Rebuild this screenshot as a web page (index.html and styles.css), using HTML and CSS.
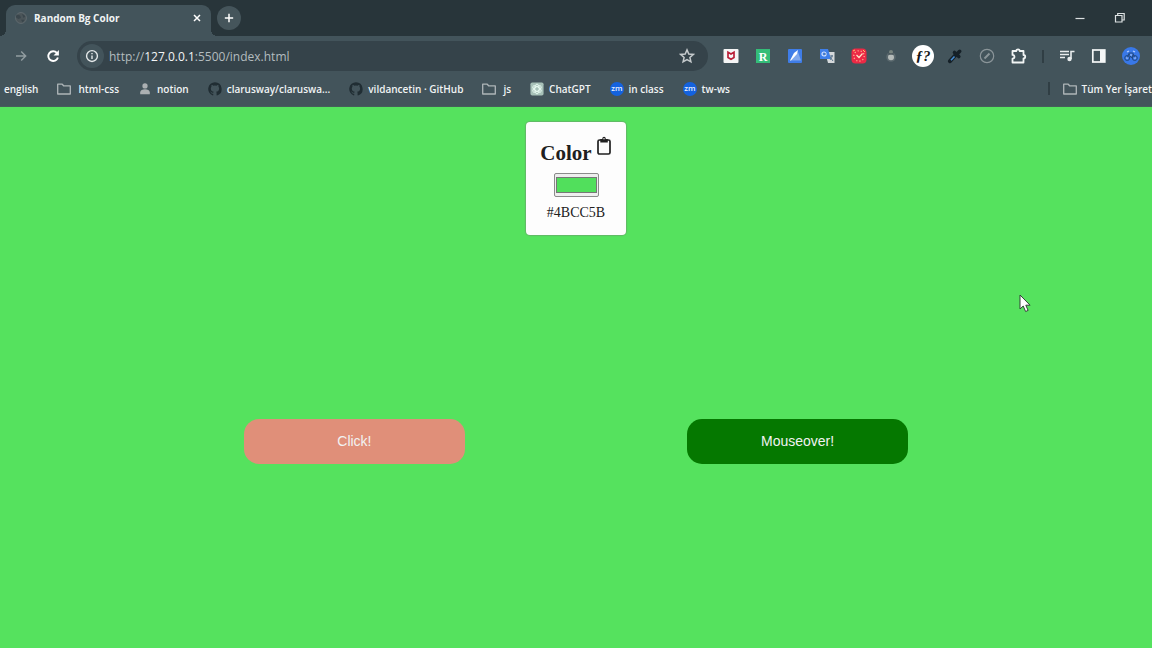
FILE: index.html
```html
<!DOCTYPE html>
<html lang="tr">
<head>
<meta charset="utf-8">
<title>Random Bg Color</title>
<link rel="stylesheet" href="styles.css">
</head>
<body>
<svg class="defs" aria-hidden="true">
  <symbol id="folder" viewBox="0 0 16 16"><path d="M.8 2.500h5.200l1.800 2h7.400v9.200H.8z" fill="none" stroke="#aeb5b8" stroke-width="1.500" stroke-linejoin="round"/></symbol>
  <symbol id="github" viewBox="0 0 16 16"><path fill="#202d33" d="M8 .3a7.700 7.700 0 0 0-2.500 15c.4.1.5-.2.5-.4v-1.600c-2.100.5-2.500-.9-2.500-.9-.3-.9-.8-1.100-.8-1.100-.7-.5 0-.5 0-.5.8.1 1.200.8 1.200.8.7 1.200 1.800.8 2.200.6.1-.5.3-.8.5-1-1.700-.2-3.400-.8-3.400-3.700 0-.8.3-1.500.8-2-.1-.2-.3-1 .1-2 0 0 .6-.2 2 .8a7 7 0 0 1 3.700 0c1.400-1 2-.8 2-.8.4 1 .2 1.800.1 2 .5.5.8 1.200.8 2 0 2.900-1.700 3.500-3.400 3.700.3.2.5.7.5 1.400v2.300c0 .2.100.5.5.4A7.700 7.700 0 0 0 8 .3z"/></symbol>
</svg>

<header class="browser">
  <div class="tabs">
    <div class="tab">
      <svg class="favicon" viewBox="0 0 16 16" aria-hidden="true"><circle cx="8" cy="8" r="6.200" fill="#4b5559" stroke="#626d71" stroke-width="1"/><path d="M3 4l4 1 1 3-3 1-3-2zM9 3l4 3-2 2zM8 10l4 0-2 3z" fill="#3a464c"/></svg>
      <span class="tab-title">Random Bg Color</span>
      <button class="close" aria-label="Close tab"><svg viewBox="0 0 12 12"><path d="M3 3l6 6M9 3l-6 6"/></svg></button>
    </div>
    <button class="new-tab" aria-label="New tab"><svg viewBox="0 0 12 12"><path d="M6 1v10M1 6h10"/></svg></button>
    <div class="window-controls">
      <button aria-label="Minimize"><svg viewBox="0 0 12 12"><path d="M1.500 6.500h9"/></svg></button>
      <button aria-label="Restore"><svg viewBox="0 0 12 12"><path d="M1.500 3.500h6.500v6.500h-6.500zM3.700 3.300v-1.800h6.500v6.500h-2"/></svg></button>
    </div>
  </div>

  <div class="toolbar">
    <button class="tool" aria-label="Forward"><svg viewBox="0 0 16 16" fill="none" stroke="#929da1" stroke-width="1.400"><path d="M3 8h9.500M8.200 3.500L12.700 8l-4.500 4.500"/></svg></button>
    <button class="tool" aria-label="Reload"><svg viewBox="0 0 16 16" fill="none" stroke="#fff" stroke-width="1.900"><path d="M12.900 9.500A4.900 4.900 0 1 1 11.900 4.900"/><path d="M13.900 2v5.400H8.500z" fill="#fff" stroke="none"/></svg></button>
    <div class="omnibox">
      <button class="site-info" aria-label="Site information"><svg viewBox="0 0 16 16" fill="none" stroke="#e4e8e9" stroke-width="1.600"><circle cx="8" cy="8" r="6.200"/><path d="M8 7.300v4M8 4.500v1.400"/></svg></button>
      <p class="url">http://<span>127.0.0.1</span>:5500/index.html</p>
      <button class="star" aria-label="Bookmark"><svg viewBox="0 0 16 16" fill="none" stroke="#c5cacc" stroke-width="1.500"><path d="M8 1.900l1.800 4.100 4.500.4-3.400 3 1 4.400L8 11.500l-3.900 2.300 1-4.400-3.400-3 4.500-.4z"/></svg></button>
    </div>
    <div class="extensions">
      <button class="tool" aria-label="McAfee"><svg viewBox="0 0 16 16"><rect x=".5" y="1" width="15" height="14" rx="1" fill="#f5f5f5"/><path d="M5 4.300v5.200L8 11.300l3-1.800V4.300L8 6z" fill="none" stroke="#b91f38" stroke-width="1.700"/></svg></button>
      <button class="tool" aria-label="R extension"><svg viewBox="0 0 16 16"><rect x="1" y="1" width="14" height="14" fill="#34bd78"/><text x="8" y="12.500" text-anchor="middle" class="r-text">R</text></svg></button>
      <button class="tool" aria-label="Notes"><svg viewBox="0 0 16 16"><rect x="1" y="1" width="14" height="14" rx="1" fill="#3f7de8"/><path d="M3 12.500L11 4l3 8.500z" fill="#80a8ed"/><path d="M3 12.500L7 5l4-3-1 4L4 12.500z" fill="#fff"/></svg></button>
      <button class="tool" aria-label="Translate"><svg viewBox="0 0 16 16"><path d="M6 4h9.500v11H9z" fill="#d5d9db"/><path d="M1 1h8l3 10H1z" fill="#3f7fe9"/><circle cx="5" cy="6" r="2" fill="none" stroke="#d5e4ff" stroke-width="1.200"/><path d="M5 6h2M11 8h3M13 7v1c0 2-2 4-2 4M11 9l3 4" fill="none" stroke="#59738a" stroke-width="1"/></svg></button>
      <button class="tool" aria-label="Clock"><svg viewBox="0 0 16 16"><rect x=".5" y=".5" width="15" height="15" rx="4" fill="#ec2945"/><circle cx="8" cy="8" r="5.200" fill="none" stroke="#ffa98d" stroke-width="1.300" stroke-dasharray="1.200 2"/><path d="M5.500 7l2.500 2.500L11.500 5.500" fill="none" stroke="#ffe6ca" stroke-width="1.200"/><path d="M2 3l2-1M12 2l2 2" stroke="#ffc36a"/></svg></button>
      <button class="tool" aria-label="Assistant"><svg viewBox="0 0 16 16"><circle cx="8" cy="9" r="4.800" fill="#5b696e"/><circle cx="8" cy="4" r="2" fill="#78847f"/><circle cx="8" cy="9.200" r="3" fill="#b5bbb9"/><path d="M5.500 6h5" stroke="#35434a" stroke-width="1"/></svg></button>
      <button class="tool whatfont" aria-label="WhatFont"><svg viewBox="0 0 22 22"><circle cx="11" cy="11" r="11" fill="#fff"/><text x="11" y="15.500" text-anchor="middle" class="font-text">ƒ?</text></svg></button>
      <button class="tool" aria-label="Color picker"><svg viewBox="0 0 16 16"><path d="M3 13.200L9.500 6" stroke="#152027" stroke-width="4" stroke-linecap="round"/><path d="M7.500 4.500l4.300 4M10 6l2.700-2.700" stroke="#152027" stroke-width="3.600" stroke-linecap="round"/><path d="M4 12.300L7.500 8.500" stroke="#438bd5" stroke-width="1.500"/></svg></button>
      <button class="tool" aria-label="Compass"><svg viewBox="0 0 16 16" fill="none" stroke="#8b9599" stroke-width="1.200"><circle cx="8" cy="8" r="6.700"/><path d="M5.500 10.500L10.500 5.500" stroke-width="2"/></svg></button>
      <button class="tool" aria-label="Extensions"><svg viewBox="0 0 16 16" fill="none" stroke="#f1f4f4" stroke-width="1.800"><path d="M1.500 3h3.800c0-2.200 3.400-2.200 3.400 0h3.800v4c2.300 0 2.300 3.300 0 3.300v4.200H1.500v-3.800c2.600-.2 2.600-3.600 0-3.800z" stroke-linejoin="round"/></svg></button>
      <span class="divider"></span>
      <button class="tool" aria-label="Media"><svg viewBox="0 0 16 16" fill="none" stroke="#e9edee" stroke-width="1.600"><path d="M1 3.500h9M1 6.500h9M1 9.500h5M12 11V3.500h3.500"/><circle cx="10.500" cy="11" r="2.200" fill="#e9edee" stroke="none"/></svg></button>
      <button class="tool" aria-label="Side panel"><svg viewBox="0 0 16 16"><rect x="1.800" y="2" width="12" height="12" fill="none" stroke="#f5f7f7" stroke-width="1.700"/><path d="M9 2h5v12H9z" fill="#f5f7f7"/></svg></button>
      <button class="tool profile" aria-label="Profile"><svg viewBox="0 0 18 18"><circle cx="9" cy="9" r="9" fill="#3978e8"/><g fill="none" stroke="#234a83" stroke-width="1"><circle cx="5.200" cy="11" r="2.500"/><circle cx="12.800" cy="11" r="2.500"/><path d="M5.200 11l2-5h3.600l2 5M7 7l2.500 4 2-4"/></g><path d="M5 5l2-1M11 4l2 1M8 8h2M4 11h2M12 11h2" stroke="#b5ceff" stroke-width="1.200"/></svg></button>
    </div>
  </div>

  <nav class="bookmarks" aria-label="Bookmarks">
    <a href="#">english</a>
    <a href="#" class="folder"><svg><use href="#folder"/></svg>html-css</a>
    <a href="#"><svg viewBox="0 0 16 16"><circle cx="8" cy="4.500" r="3" fill="#abb0b2"/><path d="M2.500 14v-2c0-5 11-5 11 0v2z" fill="#abb0b2"/></svg>notion</a>
    <a href="#"><svg><use href="#github"/></svg>clarusway/claruswa...</a>
    <a href="#"><svg><use href="#github"/></svg>vildancetin · GitHub</a>
    <a href="#" class="folder"><svg><use href="#folder"/></svg>js</a>
    <a href="#"><svg viewBox="0 0 16 16"><rect x=".5" y=".5" width="15" height="15" rx="2" fill="#a7c1b8"/><g fill="none" stroke="#ecfff6" stroke-width="1"><ellipse cx="8" cy="8" rx="2.500" ry="5.500"/><ellipse cx="8" cy="8" rx="2.500" ry="5.500" transform="rotate(60 8 8)"/><ellipse cx="8" cy="8" rx="2.500" ry="5.500" transform="rotate(120 8 8)"/></g></svg>ChatGPT</a>
    <a href="#"><svg viewBox="0 0 16 16"><circle cx="8" cy="8" r="8" fill="#1462de"/><text x="8" y="10.500" text-anchor="middle" class="zoom-text">zm</text></svg>in class</a>
    <a href="#"><svg viewBox="0 0 16 16"><circle cx="8" cy="8" r="8" fill="#1462de"/><text x="8" y="10.500" text-anchor="middle" class="zoom-text">zm</text></svg>tw-ws</a>
    <span class="divider"></span>
    <a href="#" class="all"><svg><use href="#folder"/></svg>Tüm Yer İşaret</a>
  </nav>
</header>

<main class="page">
  <section class="card">
    <div class="heading">
      <h1><label for="color">Color</label></h1>
      <button class="copy" aria-label="Copy color"><svg viewBox="0 0 16 20"><rect x="2" y="4" width="12" height="14" rx="1.500" fill="none" stroke="#202020" stroke-width="1.700"/><path d="M4.300 3h2c0-3 3.500-3 3.500 0h2v3.500H4.300z" fill="#202020"/><circle cx="8" cy="2.800" r=".7" fill="#fff"/></svg></button>
    </div>
    <input id="color" type="color" value="#51df5c">
    <output for="color">#4BCC5B</output>
  </section>
  <div class="actions">
    <button class="click">Click!</button>
    <button class="mouseover">Mouseover!</button>
  </div>
  <svg class="cursor" viewBox="0 0 12 19" aria-hidden="true"><path d="M1 1v14l3.200-3 2.400 5.500 2.500-1.100-2.300-5.200h4.300z" fill="#fff" stroke="#344139" stroke-width="1"/></svg>
</main>
</body>
</html>
```
FILE: styles.css
```css
* { box-sizing: border-box; }
body {
  margin: 0;
  min-height: 100vh;
  display: flex;
  flex-direction: column;
  background: #55e25e;
  font-family: "Open Sans", sans-serif;
}
button { padding: 0; border: 0; background: none; font: inherit; color: inherit; }
svg { display: block; flex: none; }
.defs { position: absolute; width: 0; height: 0; }

.browser { background: #43545b; color: #f0f3f4; }
.tabs { height: 36px; display: flex; align-items: flex-end; background: #28353a; padding-left: 6px; }
.tab {
  position: relative;
  width: 205px;
  height: 31px;
  padding: 0 8px 5px;
  display: flex;
  align-items: center;
  background: #43545b;
  border-radius: 9px 9px 0 0;
}
.tab::before, .tab::after {
  content: "";
  position: absolute;
  bottom: 0;
  width: 6px;
  height: 6px;
}
.tab::before { right: 100%; background: radial-gradient(circle at 0 0, #28353a 6px, #43545b 6px); }
.tab::after { left: 100%; background: radial-gradient(circle at 100% 0, #28353a 6px, #43545b 6px); }
.favicon { width: 14px; height: 14px; }
.tab-title { flex: 1; margin-left: 6px; font-size: 10px; font-weight: 700; white-space: nowrap; }
.close svg { width: 12px; height: 12px; fill: none; stroke: #fff; stroke-width: 1.5; }
.new-tab {
  width: 24px;
  height: 24px;
  margin: 0 0 6px 6px;
  display: grid;
  place-items: center;
  border-radius: 50%;
  background: #45555b;
}
.new-tab svg { width: 10px; height: 10px; stroke: #fff; stroke-width: 1.8; }
.window-controls { display: flex; margin-left: auto; padding: 0 12px 6px 0; }
.window-controls button { width: 40px; height: 24px; display: grid; place-items: center; }
.window-controls svg { width: 12px; height: 12px; fill: none; stroke: #dce1e2; stroke-width: 1.2; }

.toolbar { height: 40px; display: flex; align-items: center; padding: 0 5px; }
.tool { width: 32px; height: 32px; flex: none; display: grid; place-items: center; }
.tool svg { width: 16px; height: 16px; }
.whatfont svg { width: 22px; height: 22px; }
.profile svg { width: 18px; height: 18px; }
.omnibox {
  flex: 1;
  min-width: 0;
  height: 30px;
  margin: 0 7px 0 8px;
  padding: 0 13px 0 3px;
  display: flex;
  align-items: center;
  border-radius: 15px;
  background: #35434a;
}
.site-info { width: 24px; height: 24px; display: grid; place-items: center; border-radius: 50%; background: #43545b; }
.site-info svg { width: 14px; height: 14px; }
.star svg { width: 16px; height: 16px; }
.url { flex: 1; margin: 2px 0 0 5px; font-family: "Noto Sans", sans-serif; font-size: 12px; line-height: 16px; color: #b3bcbf; white-space: nowrap; font-family: "Open Sans", sans-serif; }
.url span { color: #f3f5f6; }
.extensions { display: flex; align-items: center; }
.divider { width: 2px; height: 13px; flex: none; background: #303e44; }
.extensions .divider { margin: 0 7px; }

.bookmarks {
  height: 31px;
  display: flex;
  align-items: center;
  gap: 19px;
  padding: 0 0 5px 4px;
  border-bottom: 1px solid #455f59;
}
.bookmarks a {
  display: flex;
  align-items: center;
  gap: 5px;
  flex: none;
  color: inherit;
  font-size: 10px;
  font-weight: 600;
  line-height: 14px;
  text-decoration: none;
  white-space: nowrap;
}
.bookmarks svg { width: 14px; height: 14px; }
.bookmarks .folder { gap: 7px; }
.bookmarks .divider { margin-left: auto; }
.bookmarks .all { margin-left: -6px; }
.zoom-text { fill: #e7efff; font: 600 9px "Open Sans", sans-serif; }
.r-text { fill: #fff; font: bold 12px "Liberation Serif", serif; }
.font-text { fill: #161616; font: italic bold 15px "Liberation Serif", serif; }

.page { position: relative; flex: 1; padding: 15px 22px; }
.card {
  width: 100px;
  margin: 0 auto;
  padding: 14px 12px 13px;
  display: flex;
  flex-direction: column;
  align-items: center;
  border-radius: 4px;
  background: #fdfdfd;
  box-shadow: 0 0 1px 1px #62b867;
  color: #202020;
  font-family: "Liberation Serif", serif;
}
.heading { display: flex; align-items: flex-start; gap: 4px; }
.heading h1 { margin: 4px 0 0; font-size: 21px; line-height: 26px; }
.copy svg { width: 16px; height: 20px; }
.card input {
  width: 45px;
  height: 24px;
  margin: 7px 0;
  padding: 0;
  border: 1px solid #8b8b8b;
  border-radius: 2px;
  background: #eee;
}
.card input::-webkit-color-swatch-wrapper { padding: 3px 1px; }
.card output { font-size: 14px; line-height: 18px; }
.actions {
  display: flex;
  justify-content: space-evenly;
  margin-top: 184px;
}
.actions button {
  width: 20%;
  height: 45px;
  padding-bottom: 2px;
  border-radius: 15px;
  color: #f2f2f2;
  font-family: "Liberation Sans", sans-serif;
  font-size: 14px;
}
.actions .click { background: #e08f79; }
.actions .mouseover { background: #057800; }
.cursor { position: absolute; left: 1019px; top: 187px; width: 12px; height: 19px; }
```
